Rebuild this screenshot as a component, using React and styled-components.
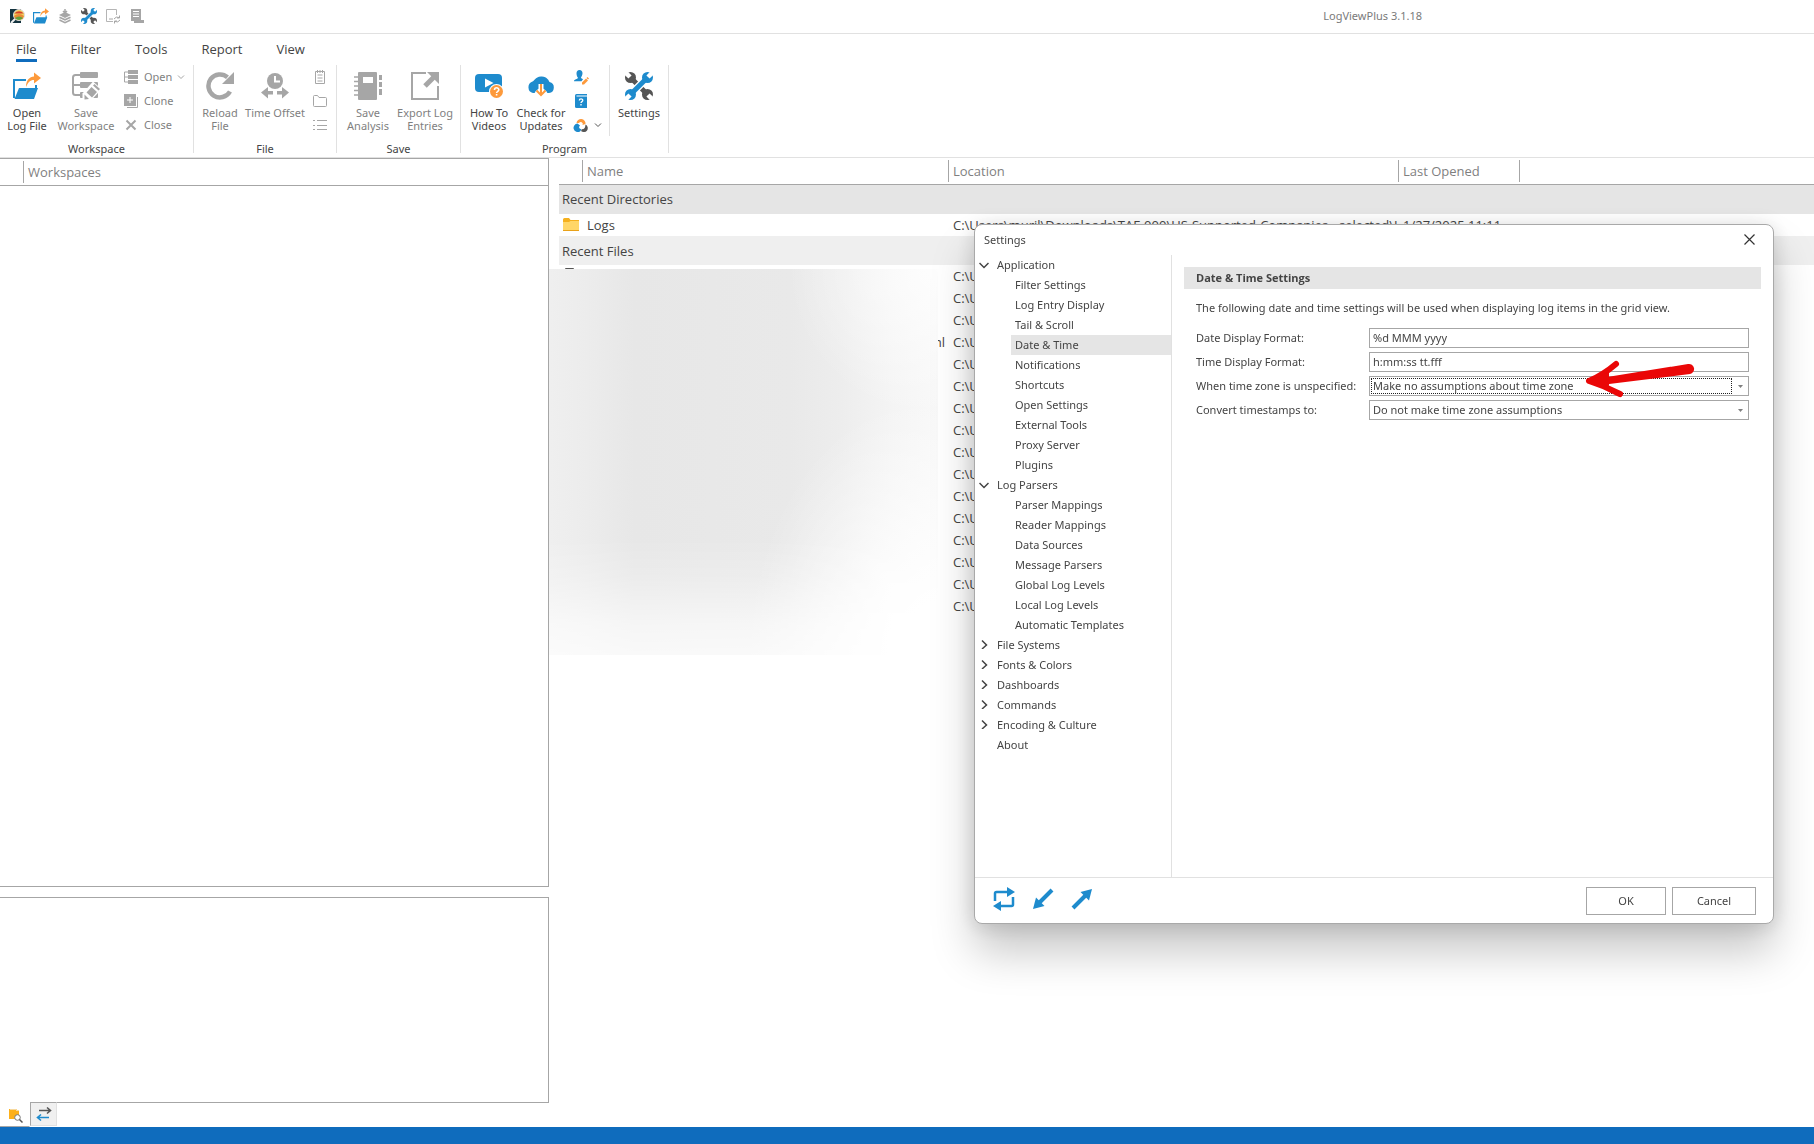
import React from 'react'
import styled, { createGlobalStyle } from 'styled-components'

const BLUE = '#1e8bcd'
const ORANGE = '#fd9a3c'
const DARK = '#555555'
const GREY = '#a6a6a6'

const GlobalStyle = createGlobalStyle`
	* { box-sizing: border-box; }
	body {
		margin: 0;
		background: #fff;
		color: #444;
		font-family: 'Noto Sans', 'Open Sans', sans-serif;
		font-size: 11px;
		overflow: hidden;
	}
	button, input, select { font: inherit; color: inherit; }
	button { border: 0; background: none; padding: 0; }
	svg { display: block; flex: none; }
	ul { list-style: none; margin: 0; padding: 0; }
`

const Window = styled.div`
	display: flex;
	flex-direction: column;
	height: 100vh;
`
const TitleBar = styled.header`
	display: flex;
	align-items: center;
	height: 34px;
	padding: 0 0 2px 9px;
	border-bottom: 1px solid #e1e1e1;
`
const QuickAccess = styled.div`
	display: flex;
	gap: 8px;
`
const AppTitle = styled.h1`
	margin: 0 392px 0 auto;
	font-size: 11px;
	font-weight: 400;
	color: #7a7a7a;
`
const Tabs = styled.nav`
	display: flex;
	gap: 34px;
	height: 31px;
	padding-left: 16px;
`
const Tab = styled.a`
	height: 28px;
	line-height: 30px;
	font-family: 'Open Sans', sans-serif;
	font-size: 13px;
	color: #444;
	text-decoration: none;
	border-bottom: 3px solid ${p => (p.$active ? '#0f6cbd' : 'transparent')};
`
const Ribbon = styled.div`
	display: flex;
	height: 93px;
	border-bottom: 1px solid #e1e1e1;
`
const Group = styled.section`
	display: flex;
	flex-direction: column;
	width: ${p => p.$w}px;
	height: 88px;
	border-right: 1px solid #e1e1e1;
`
const Tools = styled.div`
	display: flex;
	height: 76px;
`
const GroupLabel = styled.div`
	height: 12px;
	line-height: 16px;
	text-align: center;
`
const BigButton = styled.button`
	display: flex;
	flex: none;
	flex-direction: column;
	align-items: center;
	width: ${p => p.$w}px;
	padding-top: 7px;
	color: ${p => (p.$off ? '#7f7f7f' : '#444')};
	line-height: 13px;
	white-space: nowrap;
	span { margin-top: 6px; text-align: center; }
`
const SmallColumn = styled.div`
	display: flex;
	flex-direction: column;
	padding: 0 7px 0 ${p => p.$left}px;
`
const SmallButton = styled.button`
	display: flex;
	align-items: center;
	gap: 5px;
	height: 24px;
	color: #7f7f7f;
	span { line-height: 20px; }
`
const Divider = styled.div`
	width: 1px;
	height: 71px;
	background: #e1e1e1;
`

const Main = styled.main`
	display: flex;
	flex: 1;
	min-height: 0;
`
const Left = styled.div`
	display: flex;
	flex-direction: column;
	width: 549px;
`
const Panel = styled.section`
	flex: ${p => (p.$h ? `0 0 ${p.$h}px` : 1)};
	border: 1px solid #a6a6a6;
	border-left: 0;
	margin-bottom: ${p => (p.$h ? 0 : 10)}px;
`
const PanelHead = styled.div`
	display: flex;
	align-items: center;
	height: 27px;
	padding-left: 23px;
	border-bottom: 1px solid #a6a6a6;
	font-family: 'Open Sans', sans-serif;
	font-size: 13px;
	color: #7f7f7f;
	span { border-left: 1px solid #a6a6a6; padding-left: 4px; line-height: 22px; }
`
const DockTabs = styled.div`
	display: flex;
	align-items: flex-start;
	height: 25px;
	margin-top: -1px;
	position: relative;
`
const DockTab = styled.button`
	display: flex;
	align-items: center;
	justify-content: center;
	width: ${p => (p.$active ? 30 : 27)}px;
	height: ${p => (p.$active ? 25 : 24)}px;
	background: ${p => (p.$active ? '#fff' : '#f0f0f0')};
	border: 1px solid ${p => (p.$active ? '#a6a6a6' : '#e1e1e1')};
	border-top-color: ${p => (p.$active ? '#fff' : '#a6a6a6')};
	border-left: ${p => (p.$active ? 0 : '1px solid #a6a6a6')};
	border-right-color: ${p => (p.$active ? '#fff' : '#e1e1e1')};
`
const StatusBar = styled.footer`
	height: 17px;
	background: #0f6cbd;
`

const Right = styled.div`
	position: relative;
	flex: 1;
	padding-left: 10px;
`
const List = styled.table`
	width: 100%;
	table-layout: fixed;
	border-collapse: collapse;
	font-family: 'Open Sans', sans-serif;
	font-size: 13px;
	thead tr { height: 26px; border-bottom: 1px solid #a6a6a6; }
	th { padding: 0; text-align: left; font-weight: 400; color: #7f7f7f; }
	th div { height: 22px; line-height: 22px; padding-left: 4px; border-left: 1px solid #a6a6a6; }
	th:first-child div { border-left: 0; }
	td { height: 22px; padding: 0 0 0 5px; line-height: 20px; white-space: nowrap; }
`
const Heading = styled.tr`
	background: ${p => (p.$first ? '#e5e5e5' : '#efefef')};
	td { height: ${p => (p.$first ? 30 : 29)}px; padding-left: 3px; }
`
const IconCell = styled.td`
	&& { padding-left: 4px; }
`
const NameTail = styled.td`
	&& { padding-right: 3px; text-align: right; }
`
// smudged area that hides the names of the recent files
const Redaction = styled.div`
	position: absolute;
	left: 0;
	top: 111px;
	width: 389px;
	height: 386px;
	background: #fff;
	&::before {
		content: '';
		display: block;
		height: 100%;
		background:
			radial-gradient(ellipse 150px 150px at 100% 0, rgba(255,255,255,.8), rgba(255,255,255,0)),
			radial-gradient(ellipse 190px 260px at 100% 100%, #fff 20%, rgba(255,255,255,0)),
			linear-gradient(to right, #efefef 0, #ececec 10%, #e7e7e7 22%, #e9e9e9 62%, #ededed 75%, #f4f4f4 88%, #f8f8f8 100%);
		mask-image: linear-gradient(to bottom, #000 0, #000 70%, rgba(0,0,0,.8) 80%, rgba(0,0,0,.4) 92%, rgba(0,0,0,.25) 100%);
	}
`

const Dialog = styled.div`
	position: fixed;
	top: 224px;
	right: 40px;
	display: flex;
	flex-direction: column;
	width: 800px;
	height: 700px;
	background: #fff;
	border: 1px solid #a9a9a9;
	border-radius: 8px;
	box-shadow: 0 28px 44px rgba(0,0,0,.22), 0 2px 20px rgba(0,0,0,.14);
`
const DialogTitle = styled.div`
	display: flex;
	align-items: center;
	justify-content: space-between;
	height: 30px;
	padding: 0 18px 2px 9px;
	h2 { margin: 0; font-size: 11px; font-weight: 400; }
`
const DialogBody = styled.div`
	display: flex;
	flex: 1;
`
const Tree = styled.ul`
	width: 197px;
	border-right: 1px solid #e1e1e1;
`
const Branch = styled.button`
	display: flex;
	align-items: center;
	width: 100%;
	height: 20px;
	padding: 0 0 2px 4px;
	gap: 8px;
	svg, i { width: 10px; }
`
const Leaf = styled.button`
	display: flex;
	align-items: center;
	width: calc(100% - 36px);
	height: 20px;
	margin-left: 36px;
	padding: 0 0 2px 4px;
	background: ${p => (p.$active ? '#e5e5e5' : 'none')};
`
const Page = styled.form`
	flex: 1;
	padding: 12px 12px 0;
	h3 {
		margin: 0;
		padding-left: 12px;
		font-family: 'Open Sans', sans-serif;
		font-size: 11px;
		line-height: 22px;
		background: #e5e5e5;
	}
	p { margin: 9px 12px; line-height: 20px; }
`
const Fields = styled.div`
	display: grid;
	grid-template-columns: 161px 1fr;
	gap: 4px 12px;
	padding: 1px 12px 0;
	align-items: center;
	label { padding-bottom: 2px; white-space: nowrap; }
`
const Input = styled.input`
	width: 100%;
	height: 20px;
	padding: 0 3px 2px;
	border: 1px solid #a6a6a6;
	outline: 0;
`
const SelectBox = styled.div`
	display: flex;
	align-items: center;
	height: 20px;
	padding: 1px 5px 1px 1px;
	border: 1px solid #a6a6a6;
	gap: 6px;
	select {
		flex: 1;
		height: 16px;
		padding: 0 1px;
		border: 1px dotted ${p => (p.$focus ? '#222' : 'transparent')};
		background: none;
		appearance: none;
		outline: 0;
		line-height: 14px;
	}
`
const DialogFooter = styled.div`
	display: flex;
	align-items: center;
	height: 46px;
	padding: 0 17px;
	border-top: 1px solid #e1e1e1;
`
const Transfer = styled.div`
	display: flex;
	gap: 15px;
	margin-right: auto;
	padding-bottom: 4px;
`
const PushButton = styled.button`
	width: ${p => p.$w}px;
	height: 28px;
	margin-left: 6px;
	border: 1px solid #a6a6a6;
`
const Pointer = styled.svg`
	position: absolute;
	left: 606px;
	top: 132px;
`

/* icons */

const Svg = ({ s = 16, box = s, children }) => (
	<svg width={s} height={s} viewBox={`0 0 ${box} ${box}`} fill="none" aria-hidden="true">{children}</svg>
)

const OpenIcon = ({ s = 28 }) => (
	<Svg s={s} box={28}>
		<path d="M13 8H1v18" stroke={BLUE} strokeWidth="2" />
		<path d="M23 13v5" stroke={BLUE} strokeWidth="2" />
		<path d="M6 16h19l-4 11H1.5z" fill={BLUE} />
		<path d="M13 15C13 8 16.500 5 21 4.500V.5L28 6l-7 5.500V8c-4 0-6 2.500-8 7z" fill={ORANGE} />
	</Svg>
)
const WrenchIcon = ({ s = 28 }) => (
	<Svg s={s} box={28}>
		<path d="M6 6l16 16" stroke={DARK} strokeWidth="5" />
		<circle cx="5.500" cy="5.500" r="5.500" fill={DARK} />
		<circle cx="22.500" cy="22.500" r="5.500" fill={DARK} />
		<path d="M5 5L-1-1M23 23l6 6" stroke="#fff" strokeWidth="4.500" />
		<path d="M8 20L20 8" stroke="#fff" strokeWidth="7.500" />
		<path d="M6 22L22 6" stroke={BLUE} strokeWidth="5" />
		<circle cx="22.500" cy="5.500" r="5.500" fill={BLUE} />
		<circle cx="5.500" cy="22.500" r="5.500" fill={BLUE} />
		<path d="M23 5l6-6M5 23l-6 6" stroke="#fff" strokeWidth="4.500" />
	</Svg>
)
const SaveWorkspaceIcon = () => (
	<Svg s={28}>
		<path d="M8 3H3.500Q1 3 1 5.500V20.500Q1 23 3.500 23H8M1 13h7" stroke={GREY} strokeWidth="2" />
		<rect x="8" width="18" height="6" rx="1" fill={GREY} />
		<rect x="8" y="10" width="18" height="6" rx="1" fill={GREY} />
		<rect x="8" y="20" width="18" height="6" rx="1" fill={GREY} />
		<path d="M10.500 29.500v-8L21 9.500l8.500 7.500-11 12z" fill="#fff" />
		<path d="M12.500 27.500v-5l4.500 4.500zM14.500 20.500l5-5.500 5.500 5-5 5.500zM21 13.500l1.500-1.500 5.500 5-1.500 1.500z" fill={GREY} />
	</Svg>
)
const ReloadIcon = () => (
	<Svg s={28}>
		<path d="M21.500 5.200A11.500 11.500 0 1 0 24 19.500" stroke={GREY} strokeWidth="4.500" />
		<path d="M28 0v12H16z" fill={GREY} />
	</Svg>
)
const OffsetIcon = () => (
	<Svg s={28}>
		<circle cx="14" cy="9" r="8" fill={GREY} />
		<path d="M14 4v5.500h5" stroke="#fff" strokeWidth="2" />
		<path d="M0 20.500l7-5.500v4h5v3.500H7v4zM28 20.500l-7-5.500v4h-5v3.500h5v4z" fill={GREY} />
	</Svg>
)
const AnalysisIcon = () => (
	<Svg s={28}>
		<rect x="4" width="19" height="28" rx="1" fill={GREY} />
		<rect x="9" y="5" width="10" height="6" fill="#fff" />
		<path d="M0 5h4M0 9.500h4M0 14h4M0 18.500h4M0 23h4" stroke={GREY} strokeWidth="1.500" />
		<path d="M26.500 3v5M26.500 10v5M26.500 17v6" stroke={GREY} strokeWidth="3" />
	</Svg>
)
const ExportIcon = () => (
	<Svg s={28}>
		<path d="M15 1H1v26h26V14" stroke={GREY} strokeWidth="2" />
		<path d="M14 14L23 5" stroke={GREY} strokeWidth="5" />
		<path d="M16 0h12v12z" fill={GREY} />
	</Svg>
)
const VideoIcon = () => (
	<Svg s={28}>
		<rect y="2" width="27" height="18" rx="4" fill={BLUE} />
		<path d="M10 6.500v9l8.500-4.500z" fill="#fff" />
		<circle cx="21.500" cy="19.500" r="7.500" fill="#fff" />
		<circle cx="21.500" cy="19.500" r="6.500" fill={ORANGE} />
		<path d="M19.500 18c0-3 4.300-2.800 4.300-.3 0 1.600-2.200 1.600-2.200 3.300M21.600 22v1.600" stroke="#fff" strokeWidth="1.600" />
	</Svg>
)
const CloudIcon = () => (
	<Svg s={28}>
		<path d="M6 21a6 6 0 0 1-.5-11.500C7 9.500 8 5 14 4.500s8 4.500 8.500 5.500A5.600 5.600 0 0 1 22 21z" fill={BLUE} />
		<path d="M14 12v11M9.500 18.500l4.500 5 4.500-5" stroke="#fff" strokeWidth="5" />
		<path d="M14 12v11M9.500 18.500l4.500 4.500 4.500-4.500" stroke={ORANGE} strokeWidth="2" />
	</Svg>
)
const StackOpenIcon = () => (
	<Svg>
		<path d="M5 3H1.500v10H5M2 8h3" stroke={GREY} />
		<path d="M5 1h10v4H5zM5 6h10v4H5zM5 11h10v4H5z" fill={GREY} />
	</Svg>
)
const CloneIcon = () => (
	<Svg>
		<path d="M1 1h12v12H1z" fill={GREY} />
		<path d="M7 4v6M4 7h6" stroke="#fff" />
		<path d="M14.500 4v10.500H4" stroke={GREY} />
	</Svg>
)
const CrossIcon = () => (
	<Svg><path d="M3.500 3.500l9 9M12.500 3.500l-9 9" stroke={GREY} strokeWidth="2" /></Svg>
)
const Chevron = ({ color = GREY }) => (
	<Svg s={8}><path d="M1 2.500l3 3 3-3" stroke={color} /></Svg>
)
const NotepadIcon = () => (
	<Svg>
		<path d="M3.500 2.500h9v12h-9zM5.500 6h5M5.500 9h5M5.500 12h5" stroke={GREY} />
		<path d="M5.500 1v3M8 1v3M10.500 1v3" stroke={GREY} />
	</Svg>
)
const FolderLineIcon = () => (
	<Svg><path d="M1.500 3.500q0-1 1-1h3l1.500 2h6.500q1 0 1 1v7q0 1-1 1h-11q-1 0-1-1z" stroke={GREY} /></Svg>
)
const BulletsIcon = () => (
	<Svg><path d="M1 3.500h2M5 3.500h10M1 8.500h2M5 8.500h10M1 12.500h2M5 12.500h10" stroke={GREY} /></Svg>
)
const UserEditIcon = () => (
	<Svg>
		<path d="M6.500 1c2 0 3 1.500 3 3.300S8.500 8 8 8.500c0 1 1 1.200 2 1.700l-1.500 2H1c0-2 3.500-2 4-3.500C4 8 3.500 6 3.500 4.300S4.500 1 6.500 1z" fill={BLUE} />
		<path d="M9 15.500v-2l4-4 2 2-4 4zM13.500 9l1-1 1.500 1.500-1 1z" fill={ORANGE} />
	</Svg>
)
const HelpBookIcon = () => (
	<Svg>
		<path d="M2 2.500Q2 1 3.500 1H14v14H3.500Q2 15 2 13.500z" fill={BLUE} />
		<path d="M3.500 3H14" stroke="#fff" />
		<path d="M6.300 7.500c0-2.300 3.500-2.200 3.500-.2 0 1.400-1.800 1.300-1.800 2.700M8 11v1.500" stroke="#fff" strokeWidth="1.300" />
	</Svg>
)
const RingsIcon = () => (
	<Svg>
		<path d="M3.500 6a4.500 4.500 0 1 1 9 1L9.500 8A2 2 0 0 0 6 6z" fill={ORANGE} />
		<path d="M4.500 6.500L7 8.500Q4.500 11 8.500 12.500L7 14.500A4.300 4.300 0 1 1 4.500 6.500z" fill={BLUE} />
		<path d="M12.500 7.500a4 4 0 1 1-4.500 6.500L9 12q3 1 3.500-4.500z" fill={DARK} />
	</Svg>
)
const LogoIcon = () => (
	<Svg>
		<path d="M1 1h11v14H1z" fill="#14333f" />
		<circle cx="10" cy="7" r="5.500" fill="#f2d15c" stroke="#ddd" />
		<path d="M5.200 5.500Q10 1 14.800 5.500z" fill="#d4402b" />
		<path d="M5 8q5-4 10 0l-1.500 3h-7z" fill="#e98b35" />
		<path d="M6 10q4-3 8 0-4 4-8 0z" fill="#5fa13c" />
		<path d="M6 11l-4 4" stroke="#eee" strokeWidth="2" />
	</Svg>
)
const LayersIcon = () => (
	<Svg>
		<path d="M8 4l6 3-6 3-6-3z" fill={GREY} />
		<path d="M2.500 9.200l5.500 2.600 5.500-2.600M2.500 12l5.500 2.600 5.500-2.600" stroke={GREY} strokeWidth="1.600" />
		<path d="M8 1v5M6 3l2 2 2-2" stroke={GREY} strokeWidth="1.500" />
	</Svg>
)
const PageSyncIcon = () => (
	<Svg>
		<path d="M8 13.500H1.500v-12h10V7" stroke="#b5b5b5" />
		<path d="M4 11h4M9 11q2-3 5-1.500M15 12q-2 3-5 1.500M14.500 7.500V10H12M9.500 15.500V13H12" stroke={GREY} />
	</Svg>
)
const PageIcon = () => (
	<Svg>
		<path d="M2 1h10v12H2z" fill={GREY} />
		<path d="M4 3.500h6M4 6h6M4 8.500h6" stroke="#fff" />
		<path d="M5 12h10v3H5z" fill={GREY} />
	</Svg>
)
const FolderIcon = () => (
	<Svg>
		<path d="M0 2.500Q0 1 1.500 1H6l1.500 2H16v10H0z" fill="#f5b01e" />
		<path d="M0 5h6l1.500-1H16v9H0z" fill="#ffd667" />
		<path d="M0 13.500h16" stroke="#e9a21a" />
	</Svg>
)
const FileIcon = () => (
	<Svg><path d="M2.500 .5h8l3 3v12h-11z" stroke={DARK} /></Svg>
)
const FolderSearchIcon = () => (
	<Svg>
		<path d="M2 2h7l1 1h2v9H2z" fill="#fdb01b" />
		<path d="M3 2.500h6M9 3.500h3" stroke="#f6d9a0" />
		<circle cx="10.500" cy="10.500" r="2.800" fill="#fff" stroke="#777" />
		<path d="M12.500 12.500l3 3" stroke={DARK} strokeWidth="1.500" />
	</Svg>
)
const SwapIcon = () => (
	<Svg>
		<path d="M3 4.500h11M11 1.500l3.500 3-3.500 3" stroke={DARK} strokeWidth="1.600" />
		<path d="M13 11.500H1.500M5 8.500l-3.500 3 3.500 3" stroke={BLUE} strokeWidth="1.600" />
	</Svg>
)
const RepeatIcon = () => (
	<Svg s={24}>
		<path d="M3 14V6.500Q3 5 4.500 5H16M21 10v7.500Q21 19 19.500 19H8" stroke={BLUE} strokeWidth="2.500" />
		<path d="M15 0l8 5-8 5zM9 14l-8 5 8 5z" fill={BLUE} />
	</Svg>
)
const DiagonalIcon = ({ up }) => (
	<Svg s={24}>
		<g transform={up ? undefined : 'rotate(180 12 12)'}>
			<path d="M3 21L17 7" stroke={BLUE} strokeWidth="4" />
			<path d="M22 2l-3 11.500L10.500 5z" fill={BLUE} />
		</g>
	</Svg>
)

const TABS = ['File', 'Filter', 'Tools', 'Report', 'View']

const QUICK = [
	['LogViewPlus', <LogoIcon />],
	['Open log file', <OpenIcon s={16} />],
	['Layers', <LayersIcon />],
	['Settings', <WrenchIcon s={16} />],
	['Refresh', <PageSyncIcon />],
	['Report', <PageIcon />],
]

const TREE = [
	['Application', ['Filter Settings', 'Log Entry Display', 'Tail & Scroll', 'Date & Time', 'Notifications', 'Shortcuts', 'Open Settings', 'External Tools', 'Proxy Server', 'Plugins']],
	['Log Parsers', ['Parser Mappings', 'Reader Mappings', 'Data Sources', 'Message Parsers', 'Global Log Levels', 'Local Log Levels', 'Automatic Templates']],
	['File Systems', []],
	['Fonts & Colors', []],
	['Dashboards', []],
	['Commands', []],
	['Encoding & Culture', []],
	['About', null],
]

const Big = ({ w, off, icon, lines }) => (
	<BigButton $w={w} $off={off}>
		{icon}
		<span>{lines[0]}{lines[1] && <><br />{lines[1]}</>}</span>
	</BigButton>
)

const RibbonBar = () => (
	<Ribbon>
		<Group $w={194}>
			<Tools>
				<Big w={54} icon={<OpenIcon />} lines={['Open', 'Log File']} />
				<Big w={64} off icon={<SaveWorkspaceIcon />} lines={['Save', 'Workspace']} />
				<SmallColumn $left={5}>
					<SmallButton><StackOpenIcon /><span>Open</span><Chevron /></SmallButton>
					<SmallButton><CloneIcon /><span>Clone</span></SmallButton>
					<SmallButton><CrossIcon /><span>Close</span></SmallButton>
				</SmallColumn>
			</Tools>
			<GroupLabel>Workspace</GroupLabel>
		</Group>
		<Group $w={143}>
			<Tools>
				<Big w={52} off icon={<ReloadIcon />} lines={['Reload', 'File']} />
				<Big w={58} off icon={<OffsetIcon />} lines={['Time Offset']} />
				<SmallColumn $left={8}>
					<SmallButton aria-label="Notes"><NotepadIcon /></SmallButton>
					<SmallButton aria-label="Folder"><FolderLineIcon /></SmallButton>
					<SmallButton aria-label="List"><BulletsIcon /></SmallButton>
				</SmallColumn>
			</Tools>
			<GroupLabel>File</GroupLabel>
		</Group>
		<Group $w={124}>
			<Tools>
				<Big w={62} off icon={<AnalysisIcon />} lines={['Save', 'Analysis']} />
				<Big w={52} off icon={<ExportIcon />} lines={['Export Log', 'Entries']} />
			</Tools>
			<GroupLabel>Save</GroupLabel>
		</Group>
		<Group $w={208}>
			<Tools>
				<Big w={56} icon={<VideoIcon />} lines={['How To', 'Videos']} />
				<Big w={48} icon={<CloudIcon />} lines={['Check for', 'Updates']} />
				<SmallColumn $left={8}>
					<SmallButton aria-label="Account"><UserEditIcon /></SmallButton>
					<SmallButton aria-label="Help"><HelpBookIcon /></SmallButton>
					<SmallButton aria-label="Theme"><RingsIcon /><Chevron color={DARK} /></SmallButton>
				</SmallColumn>
				<Divider />
				<Big w={58} icon={<WrenchIcon />} lines={['Settings']} />
			</Tools>
			<GroupLabel>Program</GroupLabel>
		</Group>
	</Ribbon>
)

const RecentList = () => (
	<Right>
		<List>
			<colgroup>
				<col style={{ width: 23 }} />
				<col style={{ width: 366 }} />
				<col style={{ width: 450 }} />
				<col style={{ width: 121 }} />
				<col />
			</colgroup>
			<thead>
				<tr>
					<th><div /></th>
					<th><div>Name</div></th>
					<th><div>Location</div></th>
					<th><div>Last Opened</div></th>
					<th><div /></th>
				</tr>
			</thead>
			<tbody>
				<Heading $first><td colSpan={5}>Recent Directories</td></Heading>
				<tr>
					<IconCell><FolderIcon /></IconCell>
					<td>Logs</td>
					<td>C:\Users\muril\Downloads\TAF-000\US-Supported-Companies - selected\L</td>
					<td>1/27/2025 11:11</td>
					<td />
				</tr>
				<Heading><td colSpan={5}>Recent Files</td></Heading>
				{Array.from({ length: 16 }, (_, i) => (
					<tr key={i}>
						<IconCell><FileIcon /></IconCell>
						<NameTail>{i === 3 ? 'html' : ''}</NameTail>
						<td>C:\Users</td>
						<td />
						<td />
					</tr>
				))}
			</tbody>
		</List>
		<Redaction />
	</Right>
)

const SettingsTree = () => (
	<Tree>
		{TREE.map(([name, items]) => (
			<li key={name}>
				<Branch>
					{items ? (
						<Svg s={10}>
							<path d={items.length ? 'M.5 4L5 8.500 9.500 4' : 'M3 1.500L7.500 6 3 10'} stroke="#444" strokeWidth="1.500" />
						</Svg>
					) : <i />}
					{name}
				</Branch>
				{items && items.length > 0 && (
					<ul>
						{items.map(item => (
							<li key={item}><Leaf $active={item === 'Date & Time'}>{item}</Leaf></li>
						))}
					</ul>
				)}
			</li>
		))}
	</Tree>
)

const DropDown = ({ id, focus, value }) => (
	<SelectBox $focus={focus}>
		<select id={id} defaultValue={value}><option>{value}</option></select>
		<svg width="5" height="3" aria-hidden="true"><path d="M0 0h5L2.500 3z" fill="#7f7f7f" /></svg>
	</SelectBox>
)

const SettingsDialog = () => (
	<Dialog role="dialog" aria-labelledby="settings-title">
		<DialogTitle>
			<h2 id="settings-title">Settings</h2>
			<button aria-label="Close">
				<Svg s={11}><path d="M.5 .5l10 10M10.500 .5l-10 10" stroke="#333" strokeWidth="1.200" /></Svg>
			</button>
		</DialogTitle>
		<DialogBody>
			<SettingsTree />
			<Page>
				<h3>Date &amp; Time Settings</h3>
				<p>The following date and time settings will be used when displaying log items in the grid view.</p>
				<Fields>
					<label htmlFor="date-format">Date Display Format:</label>
					<Input id="date-format" defaultValue="%d MMM yyyy" />
					<label htmlFor="time-format">Time Display Format:</label>
					<Input id="time-format" defaultValue="h:mm:ss tt.fff" />
					<label htmlFor="zone">When time zone is unspecified:</label>
					<DropDown id="zone" focus value="Make no assumptions about time zone" />
					<label htmlFor="convert">Convert timestamps to:</label>
					<DropDown id="convert" value="Do not make time zone assumptions" />
				</Fields>
			</Page>
		</DialogBody>
		<DialogFooter>
			<Transfer>
				<button aria-label="Reset"><RepeatIcon /></button>
				<button aria-label="Import"><DiagonalIcon /></button>
				<button aria-label="Export"><DiagonalIcon up /></button>
			</Transfer>
			<PushButton $w={80}>OK</PushButton>
			<PushButton $w={84}>Cancel</PushButton>
		</DialogFooter>
		<Pointer width="116" height="44" viewBox="0 0 116 44" aria-hidden="true">
			<path d="M20 21L107 7a4.500 4.500 0 0 1 2 10L20 28z" fill="#ea0707" />
			<path d="M35 7Q22 18 8 24Q24 29 39 37" fill="none" stroke="#ea0707" strokeWidth="6" strokeLinecap="round" strokeLinejoin="round" />
			<path d="M8 24L28 15v14z" fill="#ea0707" />
		</Pointer>
	</Dialog>
)

const App = () => (
	<>
		<GlobalStyle />
		<Window>
			<TitleBar>
				<QuickAccess>
					{QUICK.map(([name, icon]) => <button key={name} aria-label={name}>{icon}</button>)}
				</QuickAccess>
				<AppTitle>LogViewPlus 3.1.18</AppTitle>
			</TitleBar>
			<Tabs>
				{TABS.map(name => <Tab key={name} href="#" $active={name === 'File'}>{name}</Tab>)}
			</Tabs>
			<RibbonBar />
			<Main>
				<Left>
					<Panel><PanelHead><span>Workspaces</span></PanelHead></Panel>
					<Panel $h={206} />
					<DockTabs>
						<DockTab $active aria-label="Browse"><FolderSearchIcon /></DockTab>
						<DockTab aria-label="Transfers"><SwapIcon /></DockTab>
					</DockTabs>
				</Left>
				<RecentList />
			</Main>
			<StatusBar />
		</Window>
		<SettingsDialog />
	</>
)

export default App
